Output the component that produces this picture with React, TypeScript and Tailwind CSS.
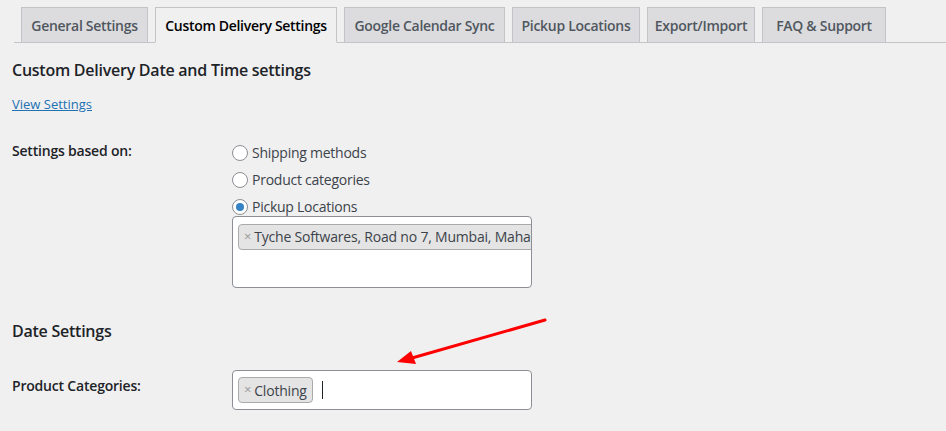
import React from "react";

const tabs = [
  { label: "General Settings", w: "w-[127px]" },
  { label: "Custom Delivery Settings", w: "w-[182px]", active: true },
  { label: "Google Calendar Sync", w: "w-[161px]" },
  { label: "Pickup Locations", w: "w-[128px]" },
  { label: "Export/Import", w: "w-[108px]" },
  { label: "FAQ & Support", w: "w-[124px]" },
];

function Radio({ checked, label }: { checked?: boolean; label: string }) {
  return (
    <label className="flex items-center h-[27px] gap-[4px] text-[14px] text-[#3c434a] tracking-[-0.25px]">
      <span className="w-[16px] h-[16px] rounded-full border border-[#8c8f94] bg-white flex items-center justify-center">
        {checked && <span className="w-[8px] h-[8px] rounded-full bg-[#3582c4]" />}
      </span>
      {label}
    </label>
  );
}

function Chip({ label }: { label: string }) {
  return (
    <span className="inline-flex items-center h-[26px] px-[5px] bg-[#e4e4e4] border border-[#aaaaaa] rounded-[4px] text-[14px] text-[#3c434a] whitespace-nowrap tracking-[-0.2px]">
      <span className="text-[#999] text-[13px] mr-[3px]">×</span>
      {label}
    </span>
  );
}

export default function App() {
  return (
    <div
      className="relative w-[946px] h-[431px] bg-[#f0f0f1] overflow-hidden text-[#1d2327]"
      style={{ fontFamily: '"Open Sans", "Noto Sans", sans-serif' }}
    >
      {/* tabs */}
      <div className="flex items-end pt-[7px] ml-[14px] border-b border-[#c3c4c7] h-[43px]">
        <div className="flex gap-[7px] ml-[7px] -mb-px">
          {tabs.map((t) => (
            <div
              key={t.label}
              className={`${t.w} h-[36px] flex items-center justify-center border border-[#c3c4c7] text-[14px] font-semibold whitespace-nowrap tracking-[-0.3px] ${
                t.active
                  ? "bg-[#f0f0f1] border-b-[#f0f0f1] text-[#000]"
                  : "bg-[#dcdcde] text-[#50575e]"
              }`}
            >
              {t.label}
            </div>
          ))}
        </div>
      </div>

      <div className="px-[12px]">
        <h2 className="text-[16px] font-semibold mt-[15px] leading-[24px] tracking-[-0.25px]">
          Custom Delivery Date and Time settings
        </h2>
        <a href="#" className="block mt-[12px] text-[13px] text-[#2271b1] underline leading-[20px]">
          View Settings
        </a>

        <div className="flex mt-[25px]">
          <div className="w-[220px] text-[14px] font-semibold pt-[1px] tracking-[-0.2px]">Settings based on:</div>
          <div className="flex flex-col">
            <Radio label="Shipping methods" />
            <Radio label="Product categories" />
            <Radio label="Pickup Locations" checked />
            <div className="w-[300px] h-[72px] bg-white border border-[#8c8f94] rounded-[4px] mt-[-4px] pt-[6px] pl-[5px] overflow-hidden">
              <Chip label="Tyche Softwares, Road no 7, Mumbai, Maharashtra, India" />
            </div>
          </div>
        </div>

        <h2 className="text-[16px] font-semibold mt-[31px] leading-[24px] tracking-[-0.25px]">Date Settings</h2>

        <div className="flex mt-[27px]">
          <div className="w-[220px] text-[14px] font-semibold pt-[5px] tracking-[-0.2px]">Product Categories:</div>
          <div className="w-[300px] h-[40px] bg-white border border-[#8c8f94] rounded-[4px] flex items-center pl-[5px] gap-[9px]">
            <Chip label="Clothing" />
            <span className="w-px h-[18px] bg-[#1d2327]" />
          </div>
        </div>
      </div>

      {/* annotation arrow */}
      <svg className="absolute left-0 top-0 pointer-events-none" width="946" height="431">
        <line x1="545" y1="320" x2="412" y2="358" stroke="#ff0000" strokeWidth="3" strokeLinecap="round" />
        <polygon points="397,362 411,351 416,364" fill="#ff0000" />
      </svg>
    </div>
  );
}
